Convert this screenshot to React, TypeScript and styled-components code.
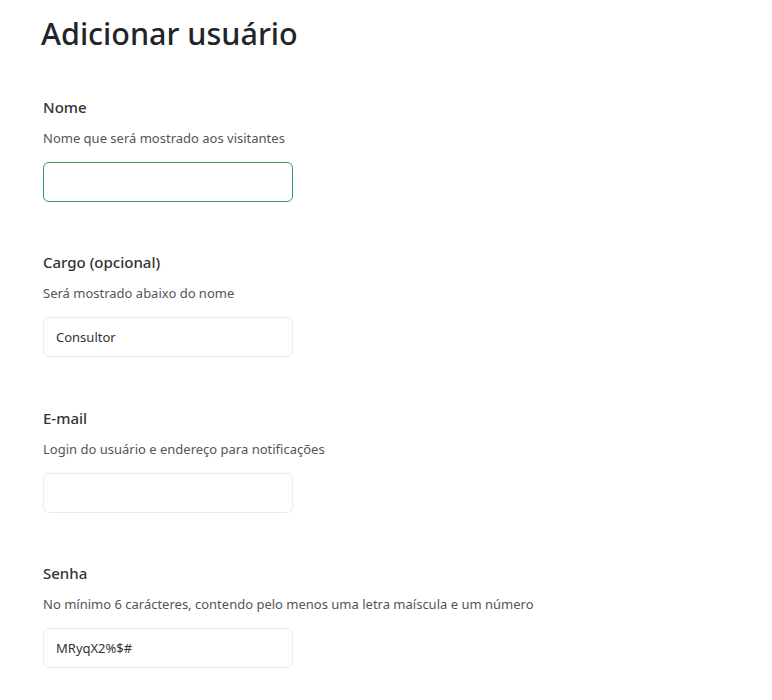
import React from "react";
import styled, { createGlobalStyle } from "styled-components";

const Global = createGlobalStyle`
  html, body { margin: 0; padding: 0; background: #ffffff; }
  body { font-family: "Noto Sans", "Open Sans", sans-serif; color: #222; }
  * { box-sizing: border-box; }
`;

const Page = styled.div`
  padding: 13px 0 0 43px;
  width: 772px;
  min-height: 700px;
`;

const Title = styled.h1`
  margin: 0 0 44px -2px;
  font-size: 30.5px;
  line-height: 40px;
  font-weight: 500;
  color: #212529;
`;

const Section = styled.div`
  display: flex;
  flex-direction: column;
  margin-bottom: 50.4px;
`;

const Label = styled.label`
  font-size: 15px;
  line-height: 20px;
  font-weight: 500;
  color: #333;
  margin-bottom: 12px;
`;

const Hint = styled.div`
  font-size: 13px;
  line-height: 18px;
  color: #555;
  margin-bottom: 15px;
`;

const Input = styled.input<{ $focused?: boolean }>`
  width: 250px;
  height: 40px;
  padding: 0 12px;
  border-radius: 6px;
  border: 1px solid ${(p) => (p.$focused ? "#2e9e57" : "#ececec")};
  background: #fff;
  font-family: "Noto Sans", "Open Sans", sans-serif;
  font-size: 13px;
  color: #333;
  outline: none;
`;

const fields = [
  { label: "Nome", hint: "Nome que será mostrado aos visitantes", value: "", focused: true },
  { label: "Cargo (opcional)", hint: "Será mostrado abaixo do nome", value: "Consultor" },
  { label: "E-mail", hint: "Login do usuário e endereço para notificações", value: "" },
  {
    label: "Senha",
    hint: "No mínimo 6 carácteres, contendo pelo menos uma letra maíscula e um número",
    value: "MRyqX2%$#",
  },
];

export default function App() {
  return (
    <Page>
      <Global />
      <Title>Adicionar usuário</Title>
      {fields.map((f) => (
        <Section key={f.label}>
          <Label>{f.label}</Label>
          <Hint>{f.hint}</Hint>
          <Input $focused={f.focused} defaultValue={f.value} readOnly />
        </Section>
      ))}
    </Page>
  );
}
